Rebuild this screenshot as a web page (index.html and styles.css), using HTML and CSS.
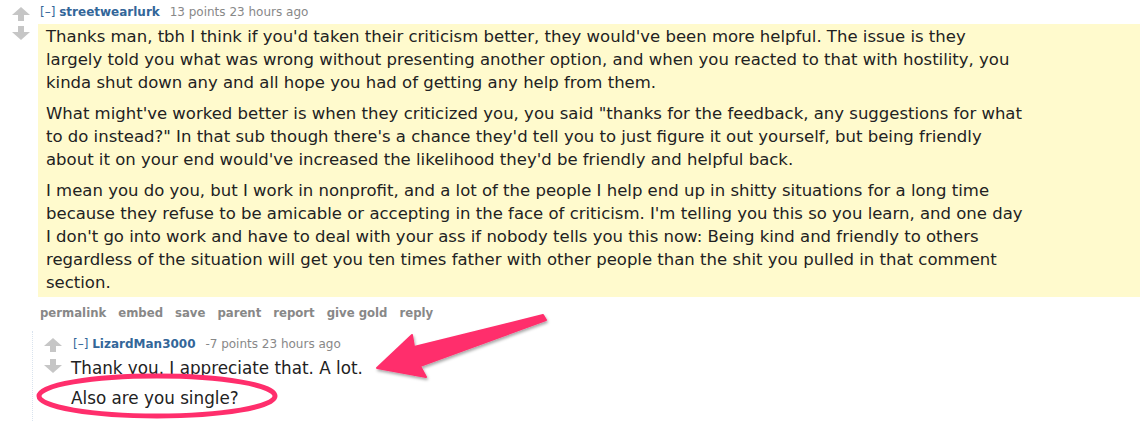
FILE: index.html
```html
<!DOCTYPE html>
<html lang="en">
<head>
<meta charset="utf-8">
<title>Comment thread</title>
<link rel="stylesheet" href="styles.css">
</head>
<body>
<div class="page">
  <div class="comment">
    <div class="midcol">
      <svg class="vote" viewBox="0 0 18 14" width="18" height="14"><path d="M9 0 L18 8 L12 8 L12 14 L6 14 L6 8 L0 8 Z"/></svg>
      <svg class="vote" viewBox="0 0 18 14" width="18" height="14"><path d="M6 0 L12 0 L12 6 L18 6 L9 14 L0 6 L6 6 Z"/></svg>
    </div>
    <div class="entry">
      <p class="tagline"><span class="expand">[–]</span> <span class="author">streetwearlurk</span> <span class="score">13 points 23 hours ago</span></p>
      <div class="usertext-body highlighted">
        <p>Thanks man, tbh I think if you'd taken their criticism better, they would've been more helpful. The issue is they<br>largely told you what was wrong without presenting another option, and when you reacted to that with hostility, you<br>kinda shut down any and all hope you had of getting any help from them.</p>
        <p>What might've worked better is when they criticized you, you said "thanks for the feedback, any suggestions for what<br>to do instead?" In that sub though there's a chance they'd tell you to just figure it out yourself, but being friendly<br>about it on your end would've increased the likelihood they'd be friendly and helpful back.</p>
        <p>I mean you do you, but I work in nonprofit, and a lot of the people I help end up in shitty situations for a long time<br>because they refuse to be amicable or accepting in the face of criticism. I'm telling you this so you learn, and one day<br>I don't go into work and have to deal with your ass if nobody tells you this now: Being kind and friendly to others<br>regardless of the situation will get you ten times father with other people than the shit you pulled in that comment<br>section.</p>
      </div>
      <ul class="buttons">
        <li>permalink</li><li>embed</li><li>save</li><li>parent</li><li>report</li><li>give gold</li><li>reply</li>
      </ul>
      <div class="child">
        <div class="comment nested">
          <div class="midcol">
            <svg class="vote" viewBox="0 0 18 14" width="18" height="14"><path d="M9 0 L18 8 L12 8 L12 14 L6 14 L6 8 L0 8 Z"/></svg>
            <svg class="vote" viewBox="0 0 18 14" width="18" height="14"><path d="M6 0 L12 0 L12 6 L18 6 L9 14 L0 6 L6 6 Z"/></svg>
          </div>
          <div class="entry">
            <p class="tagline"><span class="expand">[–]</span> <span class="author">LizardMan3000</span> <span class="score">-7 points 23 hours ago</span></p>
            <div class="usertext-body">
              <p>Thank you. I appreciate that. A lot.</p>
              <p>Also are you single?</p>
            </div>
          </div>
        </div>
      </div>
    </div>
  </div>
  <svg class="annotations" viewBox="0 0 1140 422" width="1140" height="422">
    <defs>
      <filter id="shadow" x="-10%" y="-30%" width="130%" height="170%">
        <feDropShadow dx="1" dy="2" stdDeviation="1.5" flood-color="#000" flood-opacity="0.35"/>
      </filter>
    </defs>
    <polygon class="arrow" filter="url(#shadow)" points="377,368 412,335 414,347 543,315 546,320 420,366 426,377"/>
    <ellipse class="circle" cx="157" cy="396" rx="118" ry="20"/>
  </svg>
</div>
</body>
</html>
```
FILE: styles.css
```css
html, body {
  margin: 0;
  padding: 0;
  background: #fff;
}

.page {
  position: relative;
  width: 1140px;
  height: 422px;
  overflow: hidden;
  font-family: "DejaVu Sans", Verdana, sans-serif;
  color: #222;
}

.comment {
  display: flex;
  align-items: flex-start;
  padding: 7px 0 0 12px;
}

.midcol {
  display: flex;
  flex-direction: column;
  gap: 5px;
  width: 18px;
  margin-right: 8px;
  flex: none;
}

.vote {
  display: block;
  fill: #c6c6c6;
}

.entry {
  flex: 1;
  min-width: 0;
}

.tagline {
  margin: -2px 0 0 2px;
  font-size: 12px;
  line-height: 14px;
  color: #888;
}

.expand {
  color: #369;
}

.author {
  color: #369;
  font-weight: bold;
  margin-right: 6px;
}

.usertext-body {
  margin-top: 5px;
  padding: 1px 8px 3px;
  font-size: 16.5px;
  line-height: 23px;
}

.usertext-body p {
  margin: 0 0 8px;
  max-width: 1040px;
}

.usertext-body p:last-child {
  margin-bottom: 0;
}

.highlighted {
  background: #fffacd;
}

.buttons {
  display: flex;
  gap: 12px;
  list-style: none;
  margin: 9px 0 0 2px;
  padding: 0;
  font-size: 11.7px;
  line-height: 14px;
  font-weight: bold;
  color: #888;
}

.child {
  margin: 11px 0 0 -6px;
  border-left: 1px dotted #d9e3ee;
  height: 100px;
}

.nested {
  padding: 8px 0 0 11px;
}

.nested .midcol {
  gap: 7px;
  margin: -1px 9px 0 0;
}

.nested .usertext-body {
  margin-top: 6px;
  padding: 0;
  font-size: 16.8px;
}

.nested .usertext-body p {
  margin-bottom: 7px;
}

.annotations {
  position: absolute;
  top: 0;
  left: 0;
  pointer-events: none;
}

.arrow {
  fill: #ff2e6c;
  stroke: #ff2e6c;
  stroke-width: 2;
  stroke-linejoin: round;
}

.circle {
  fill: none;
  stroke: #ff2e6c;
  stroke-width: 5;
}
```
